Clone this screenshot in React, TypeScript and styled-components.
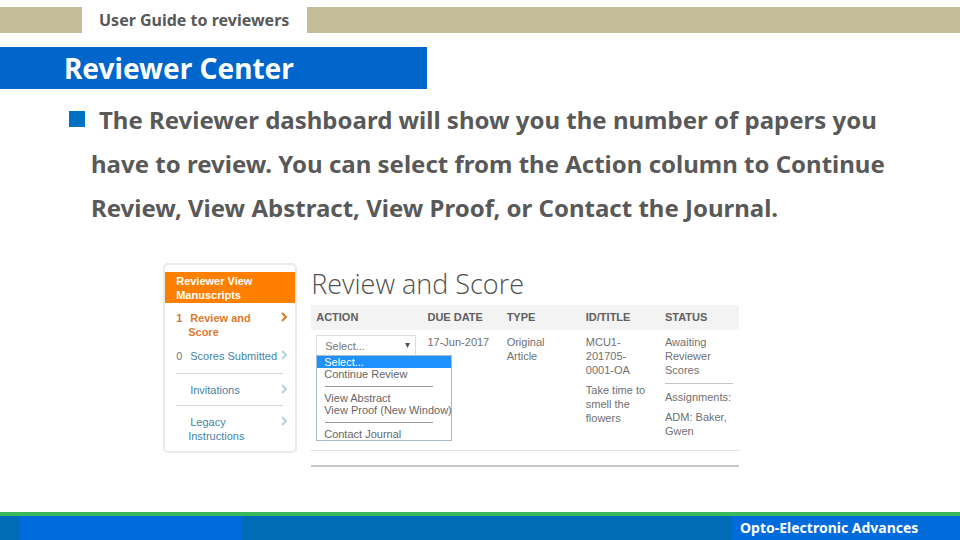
import React, { useState } from "react";
import styled, { createGlobalStyle } from "styled-components";

const GlobalStyle = createGlobalStyle`
  *, *::before, *::after { box-sizing: border-box; }
  body { margin: 0; background: #fff; }
  h1, h2, p, ul { margin: 0; padding: 0; }
  ul { list-style: none; }
`;

const Slide = styled.div`
  min-height: 100vh;
  display: flex;
  flex-direction: column;
  font-family: "Noto Sans", "Open Sans", sans-serif;
  color: #595959;
`;

const TopBand = styled.header`
  display: flex;
  margin-top: 7px;
  height: 26px;
  padding-left: 82px;
  background: #c4bd97;
`;

const GuideLabel = styled.p`
  padding: 0 18px 0 17px;
  background: #fff;
  font-size: 16px;
  font-weight: 700;
  line-height: 26px;
`;

const TitleBar = styled.h1`
  width: 44.5%;
  margin-top: 14px;
  padding-left: 64px;
  background: #0066cc;
  color: #fff;
  font-size: 28px;
  font-weight: 700;
  line-height: 42px;
  white-space: nowrap;
`;

const Intro = styled.div`
  display: flex;
  gap: 3px;
  padding: 9px 40px 0 69px;
  font-size: 24px;
  font-weight: 700;
  line-height: 44px;
`;

const Bullet = styled.span`
  flex: none;
  width: 16px;
  height: 16px;
  margin-top: 13px;
  background: #0070c0;
`;

const IntroText = styled.p`
  padding-left: 3px;
  text-indent: 8px;
`;

const Dashboard = styled.main`
  display: flex;
  align-items: flex-start;
  gap: 14px;
  margin: 33px 23% 40px 17%;
  font-family: "Liberation Sans", Arial, sans-serif;
  font-size: 11px;
  line-height: 14px;
  color: #707070;
`;

const Sidebar = styled.nav`
  flex: none;
  width: 134px;
  padding-top: 7px;
  border: 2px solid #e9e9ee;
  border-radius: 5px;
`;

const SidebarTitle = styled.h2`
  padding: 2px 11px 1px;
  background: #ff8000;
  color: #fff;
  font-size: 11px;
  line-height: 14px;
`;

const SidebarItem = styled.li<{ $divided?: boolean }>`
  margin: 0 12px 0 11px;
  padding: ${(p) => (p.$divided ? "9px 0 8px" : "8px 0 2px")};
  border-top: ${(p) => (p.$divided ? "1px solid #d4d4d4" : "0")};

  &:nth-child(2) {
    padding-bottom: 10px;
  }
`;

const SidebarLink = styled.a<{ $active?: boolean }>`
  display: grid;
  grid-template-columns: 12px 1fr 8px;
  margin-right: -5px;
  color: ${(p) => (p.$active ? "#e07a2c" : "#4484a4")};
  font-weight: ${(p) => (p.$active ? 700 : 400)};
  text-decoration: none;
  white-space: nowrap;
`;

const Count = styled.span<{ $active?: boolean }>`
  color: ${(p) => (p.$active ? "#d9744a" : "#777")};
`;

const LinkText = styled.span`
  text-indent: 2px;
`;

const Chevron = styled.svg<{ $active?: boolean }>`
  width: 8px;
  height: 10px;
  margin-top: 1px;
  fill: none;
  stroke: ${(p) => (p.$active ? "#e07a2c" : "#b4d4e4")};
  stroke-width: 2;
`;

const Panel = styled.section`
  flex: 1;
  min-width: 0;
  border-bottom: 2px solid #c8c8c8;
  padding-bottom: 14px;
`;

const PanelTitle = styled.h2`
  color: #505050;
  font-family: "Open Sans", "Noto Sans", sans-serif;
  font-size: 27px;
  font-weight: 300;
  line-height: 42px;
  white-space: nowrap;
`;

const Table = styled.table`
  width: 100%;
  border-collapse: collapse;
  table-layout: fixed;
  border-bottom: 1px solid #dedede;
`;

const HeadCell = styled.th<{ $wide?: boolean }>`
  width: ${(p) => (p.$wide ? "26%" : "18.5%")};
  padding: 5px 0 6px 5px;
  background: #f3f3f3;
  color: #606060;
  text-align: left;
  white-space: nowrap;
`;

const Cell = styled.td`
  padding: 5px 0 12px 5px;
  vertical-align: top;
  white-space: nowrap;
`;

const CellText = styled.p<{ $ruled?: boolean }>`
  margin-bottom: 6px;
  ${(p) => p.$ruled && "margin-right: 6px; padding-bottom: 6px; border-bottom: 1px solid #c4c4c4;"}

  &:last-child {
    margin-bottom: 0;
  }
`;

const SelectWrap = styled.div`
  position: relative;
  width: 100px;
`;

const ActionSelect = styled.select`
  display: block;
  width: 100%;
  height: 21px;
  padding: 0 8px;
  appearance: none;
  border: 1px solid #dcdcdc;
  border-radius: 0;
  background: #fff;
  color: #777;
  font: inherit;
`;

const Arrow = styled.svg`
  position: absolute;
  top: 8px;
  right: 6px;
  width: 5px;
  height: 5px;
  fill: #555;
  pointer-events: none;
`;

const Menu = styled.ul`
  position: absolute;
  top: 20px;
  left: 0;
  width: 136px;
  border: 1px solid #a4bccb;
  background: #fff;
  line-height: 12px;
`;

const Option = styled.li<{ $selected?: boolean }>`
  padding-left: 7px;
  background: ${(p) => (p.$selected ? "#1e90ff" : "transparent")};
  color: ${(p) => (p.$selected ? "#fff" : "#666")};
`;

const Separator = styled.li`
  width: 108px;
  margin: 6px 8px 5px;
  border-top: 1px solid #999;
`;

const Footer = styled.footer`
  display: grid;
  grid-template-columns: 20px 222px 1fr 228px;
  height: 28px;
  margin-top: auto;
  border-top: 4px solid #3cb85c;
  background: #006cb7;
`;

const FooterBlock = styled.div`
  grid-column: 2;
  background: #006cdc;
`;

const FooterLabel = styled.p`
  grid-column: 4;
  padding-left: 8px;
  background: #006cdc;
  color: #fff;
  font-size: 14px;
  font-weight: 700;
  line-height: 24px;
  white-space: nowrap;
`;

type NavEntry = { count?: string; lines: string[]; active?: boolean; divided?: boolean };

const navEntries: NavEntry[] = [
  { count: "1", lines: ["Review and", "Score"], active: true },
  { count: "0", lines: ["Scores Submitted"] },
  { lines: ["Invitations"], divided: true },
  { lines: ["Legacy", "Instructions"], divided: true },
];

const actionGroups = [
  ["Select...", "Continue Review"],
  ["View Abstract", "View Proof (New Window)"],
  ["Contact Journal"],
];

const Lines = ({ items }: { items: string[] }) => (
  <>
    {items.map((line, i) => (
      <React.Fragment key={line}>
        {i > 0 && <br />}
        {line}
      </React.Fragment>
    ))}
  </>
);

export default function App() {
  const [action, setAction] = useState("Select...");

  return (
    <Slide>
      <GlobalStyle />
      <TopBand>
        <GuideLabel>User Guide to reviewers</GuideLabel>
      </TopBand>
      <TitleBar>Reviewer Center</TitleBar>
      <Intro>
        <Bullet />
        <IntroText>
          <Lines
            items={[
              "The Reviewer dashboard will show you the number of papers you",
              "have to review. You can select from the Action column to Continue",
              "Review, View Abstract, View Proof, or Contact the Journal.",
            ]}
          />
        </IntroText>
      </Intro>

      <Dashboard>
        <Sidebar aria-label="Reviewer View">
          <SidebarTitle>
            <Lines items={["Reviewer View", "Manuscripts"]} />
          </SidebarTitle>
          <ul>
            {navEntries.map((entry) => (
              <SidebarItem key={entry.lines[0]} $divided={entry.divided}>
                <SidebarLink href="#" $active={entry.active}>
                  <Count $active={entry.active}>{entry.count}</Count>
                  <LinkText>
                    <Lines items={entry.lines} />
                  </LinkText>
                  <Chevron viewBox="0 0 8 10" $active={entry.active} aria-hidden="true">
                    <path d="M2 1 L6 5 L2 9" />
                  </Chevron>
                </SidebarLink>
              </SidebarItem>
            ))}
          </ul>
        </Sidebar>

        <Panel>
          <PanelTitle>Review and Score</PanelTitle>
          <Table>
            <thead>
              <tr>
                <HeadCell $wide>ACTION</HeadCell>
                <HeadCell>DUE DATE</HeadCell>
                <HeadCell>TYPE</HeadCell>
                <HeadCell>ID/TITLE</HeadCell>
                <HeadCell>STATUS</HeadCell>
              </tr>
            </thead>
            <tbody>
              <tr>
                <Cell>
                  <SelectWrap>
                    <ActionSelect
                      aria-label="Action"
                      value={action}
                      onChange={(e) => setAction(e.target.value)}
                    >
                      {actionGroups.flat().map((name) => (
                        <option key={name}>{name}</option>
                      ))}
                    </ActionSelect>
                    <Arrow viewBox="0 0 5 5" aria-hidden="true">
                      <path d="M0 0 H5 L2.5 5 Z" />
                    </Arrow>
                    <Menu role="listbox" aria-label="Action choices">
                      {actionGroups.map((group, i) => (
                        <React.Fragment key={group[0]}>
                          {i > 0 && <Separator role="separator" />}
                          {group.map((name) => (
                            <Option
                              key={name}
                              role="option"
                              aria-selected={name === action}
                              $selected={name === action}
                              onClick={() => setAction(name)}
                            >
                              {name}
                            </Option>
                          ))}
                        </React.Fragment>
                      ))}
                    </Menu>
                  </SelectWrap>
                </Cell>
                <Cell>17-Jun-2017</Cell>
                <Cell>
                  <Lines items={["Original", "Article"]} />
                </Cell>
                <Cell>
                  <CellText>
                    <Lines items={["MCU1-", "201705-", "0001-OA"]} />
                  </CellText>
                  <CellText>
                    <Lines items={["Take time to", "smell the", "flowers"]} />
                  </CellText>
                </Cell>
                <Cell>
                  <CellText $ruled>
                    <Lines items={["Awaiting", "Reviewer", "Scores"]} />
                  </CellText>
                  <CellText>Assignments:</CellText>
                  <CellText>
                    <Lines items={["ADM: Baker,", "Gwen"]} />
                  </CellText>
                </Cell>
              </tr>
            </tbody>
          </Table>
        </Panel>
      </Dashboard>

      <Footer>
        <FooterBlock />
        <FooterLabel>Opto-Electronic Advances</FooterLabel>
      </Footer>
    </Slide>
  );
}
